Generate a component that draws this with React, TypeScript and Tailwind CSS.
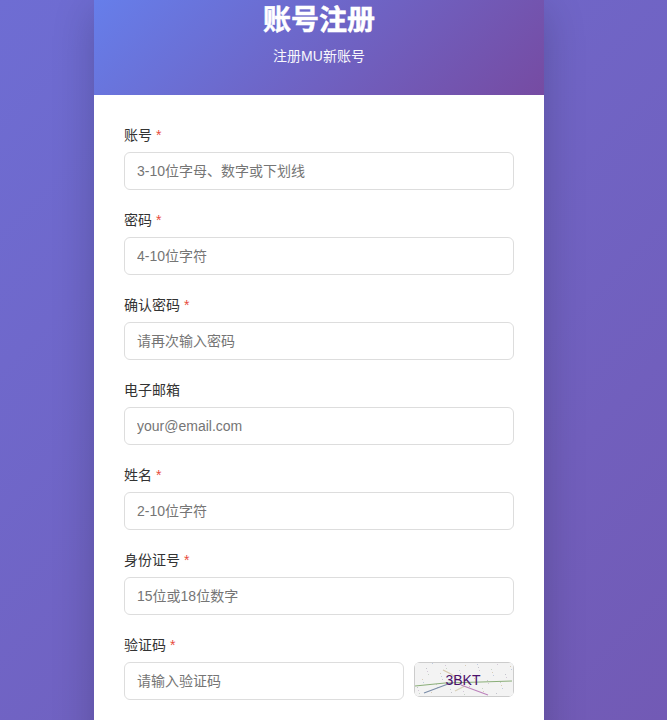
const fields = [
  { label: '账号', placeholder: '3-10位字母、数字或下划线', required: true },
  { label: '密码', placeholder: '4-10位字符', required: true },
  { label: '确认密码', placeholder: '请再次输入密码', required: true },
  { label: '电子邮箱', placeholder: 'your@email.com', required: false },
  { label: '姓名', placeholder: '2-10位字符', required: true },
  { label: '身份证号', placeholder: '15位或18位数字', required: true },
];

const inputClass =
  'w-full h-[38px] px-3 text-sm text-[#333] bg-white border border-[#ddd] rounded-md outline-none placeholder:text-[#757575]';

const dotColors = ['#c4c4cc', '#d4c8d8', '#c8d4c8', '#d8ccb8', '#c0cce0'];

// fixed noise so the captcha looks the same on every load
const dots = Array.from({ length: 50 }, (_, i) => ({
  x: (i * 37 + 11) % 97,
  y: (i * 23 + 5) % 32,
  fill: dotColors[i % dotColors.length],
}));

function FieldLabel({ label, required }: { label: string; required: boolean }) {
  return (
    <label className="block mb-1.5 text-sm leading-[21px] text-[#333]">
      {label}
      {required && <span className="text-[#e74c3c]"> *</span>}
    </label>
  );
}

function Captcha() {
  return (
    <svg viewBox="-1 -1 100 35" className="w-[100px] h-[35px] shrink-0 rounded-md bg-white">
      <rect x="-0.5" y="-0.5" width="99" height="34" rx="3" fill="#f3f3f3" stroke="#cccccc" />
      {dots.map((d) => (
        <rect key={d.x + '-' + d.y} x={d.x} y={d.y} width="1" height="1" fill={d.fill} />
      ))}
      <path d="M0 23 L30 20 L66 19 L97 18" stroke="#8aae78" strokeWidth="1" fill="none" />
      <path d="M9 30 L33 21 L38 20" stroke="#7a8ca8" strokeWidth="1.2" fill="none" />
      <path d="M28 7 L36 11 L42 16" stroke="#d8c8a8" strokeWidth="1.2" fill="none" />
      <path d="M40 28 L50 23" stroke="#d8d0b8" strokeWidth="1.2" fill="none" />
      <path d="M46 22 L73 32" stroke="#bb80bb" strokeWidth="1.1" fill="none" />
      <text x="48" y="22" textAnchor="middle" fontSize="14" fill="#4a0f6b" fontFamily="'Liberation Sans', sans-serif">
        3BKT
      </text>
    </svg>
  );
}

export default function App() {
  return (
    <div className="h-[720px] overflow-hidden bg-[linear-gradient(135deg,#6e6dd3,#725ab5)] font-['Liberation_Sans','Noto_Sans_CJK_SC',sans-serif]">
      <div className="ml-[94px] w-[450px] bg-white shadow-[0_10px_40px_rgba(0,0,0,0.2)] min-h-[800px]">
        <div className="h-[95px] pb-[28px] flex flex-col justify-end items-center text-white bg-[linear-gradient(135deg,#667eea,#764ba2)]">
          <h1 className="text-[28px] leading-[42px] font-bold mb-[4px] [-webkit-text-stroke:0.5px_white]">账号注册</h1>
          <p className="text-sm leading-[21px] opacity-95">注册MU新账号</p>
        </div>
        <form className="p-[30px]">
          {fields.map((f) => (
            <div key={f.label} className="mb-5">
              <FieldLabel label={f.label} required={f.required} />
              <input className={inputClass} placeholder={f.placeholder} />
            </div>
          ))}
          <div className="mb-5">
            <FieldLabel label="验证码" required />
            <div className="flex items-start gap-2.5">
              <input className={inputClass + ' flex-1 min-w-0'} placeholder="请输入验证码" />
              <Captcha />
            </div>
          </div>
        </form>
      </div>
    </div>
  );
}
